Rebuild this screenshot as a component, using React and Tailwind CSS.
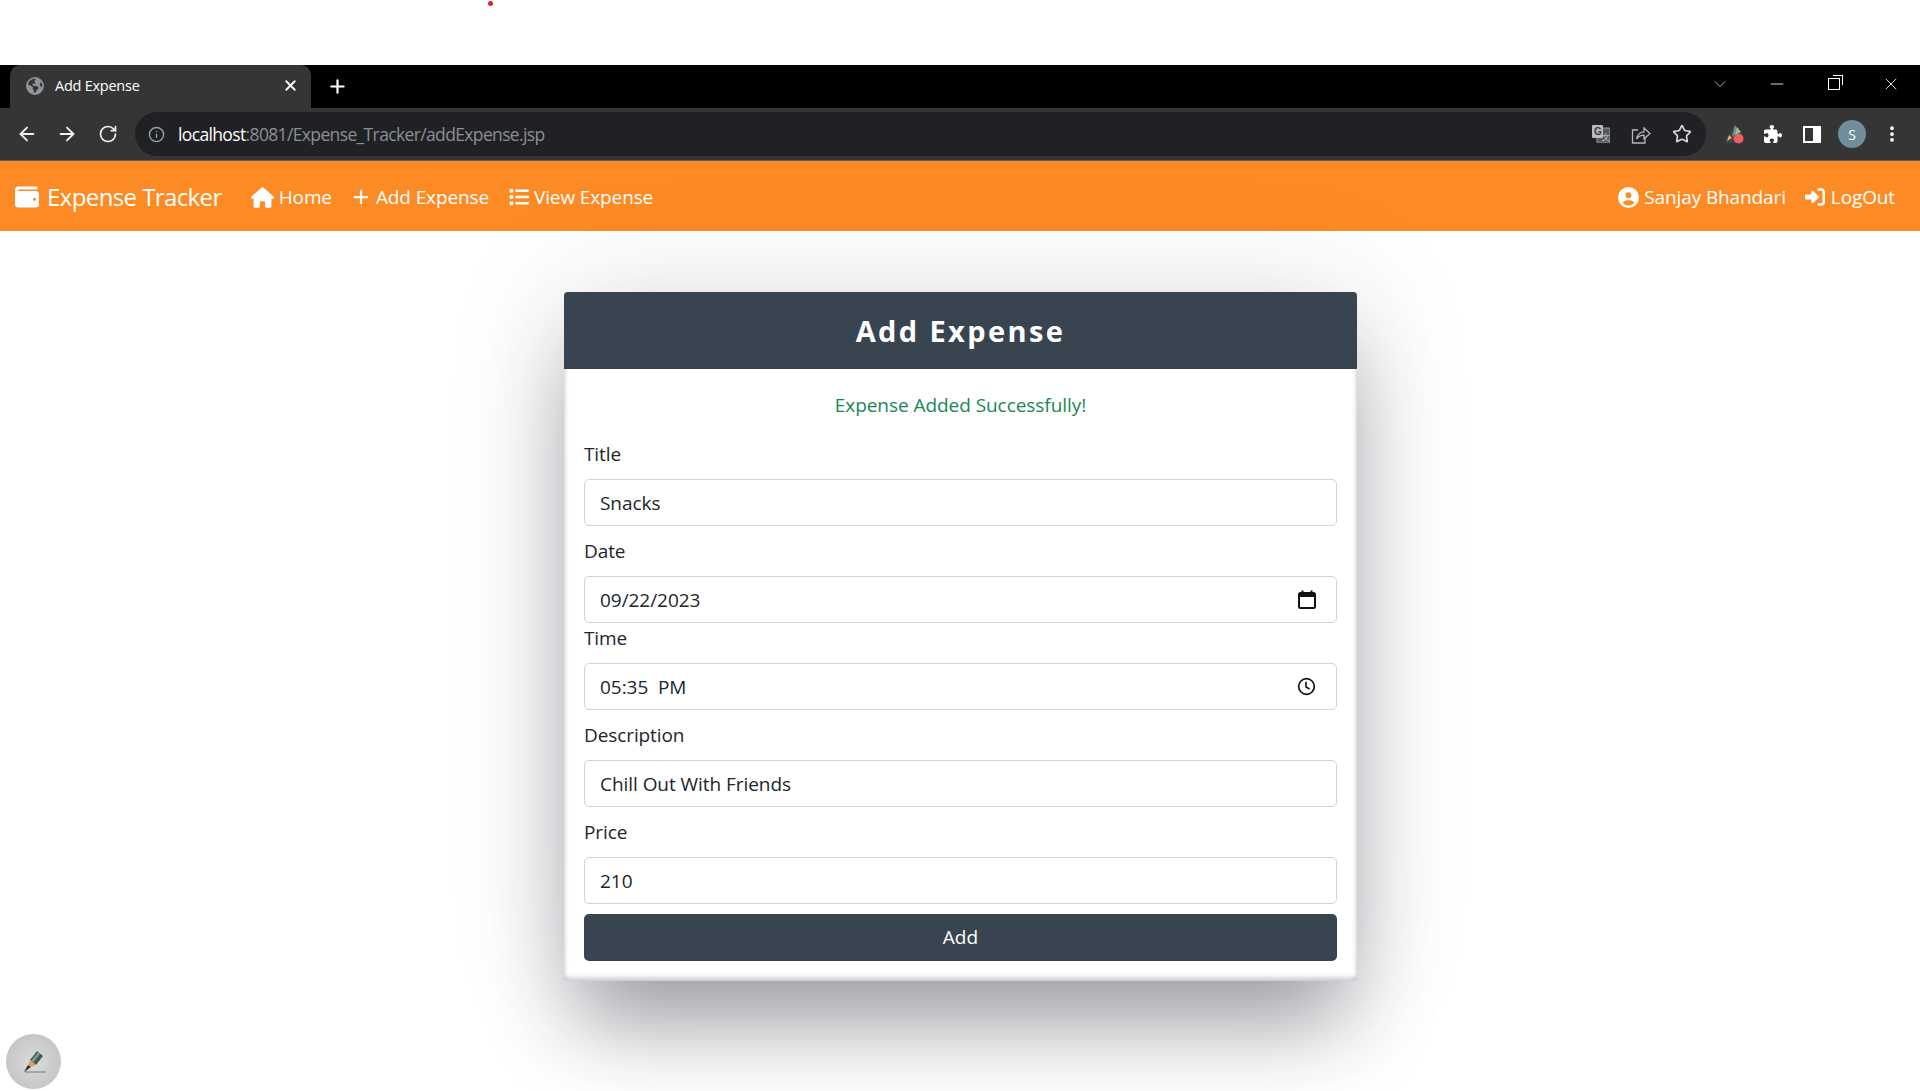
import { ArrowLeft, ArrowRight, RotateCw, Info, Star, MoreVertical, ChevronDown, Minus, X, Plus } from 'lucide-react';
import { FaWallet, FaHouse, FaPlus, FaList, FaCircleUser, FaRightToBracket, FaEarthAmericas, FaPuzzlePiece } from 'react-icons/fa6';

const font = 'font-["Open_Sans","Noto_Sans",sans-serif]';

function Field({ label, value, icon, className = 'mb-[11px]' }) {
  return (
    <div className={className}>
      <label className="mb-[10px] block text-[19px] leading-[29px] tracking-[-0.1px] text-[#212529]">{label}</label>
      <div className="flex h-[47px] items-center rounded-[5px] border border-[#ced4da] bg-white pl-[15px] pr-[20px]">
        <input
          readOnly
          value={value}
          className="min-w-0 flex-1 bg-transparent pt-[2px] text-[19px] tracking-[-0.05px] text-[#212529] outline-none"
        />
        {icon}
      </div>
    </div>
  );
}

function CalendarIcon() {
  return (
    <svg width="18" height="19" viewBox="0 0 18 19" fill="none">
      <rect x="1" y="3" width="16" height="15" rx="1.5" stroke="#111" strokeWidth="2" />
      <rect x="1" y="3" width="16" height="4" fill="#111" />
      <rect x="3.5" y="0.5" width="2" height="3" fill="#111" />
      <rect x="12.5" y="0.5" width="2" height="3" fill="#111" />
    </svg>
  );
}

function ClockIcon() {
  return (
    <svg width="19" height="19" viewBox="0 0 19 19" fill="none">
      <circle cx="9.5" cy="9.5" r="7.8" stroke="#111" strokeWidth="1.7" />
      <path d="M9 4.8V10l3.6 2" stroke="#111" strokeWidth="1.6" />
    </svg>
  );
}

function TranslateIcon() {
  return (
    <svg width="18" height="18" viewBox="0 0 18 18">
      <rect x="5" y="3" width="13" height="15" rx="1" fill="#55585c" stroke="#9a9da0" />
      <rect x="0" y="0" width="11" height="13" rx="1" fill="#b9bbbd" />
      <text x="2" y="10" fontSize="10" fontWeight="700" fontFamily="Liberation Sans" fill="#3a3a3a">G</text>
      <text x="10" y="15" fontSize="8" fill="#d0d0d0" fontFamily="Liberation Sans">文</text>
    </svg>
  );
}

function ShareIcon() {
  return (
    <svg width="20" height="19" viewBox="0 0 20 19" fill="none" stroke="#b5b7b9" strokeWidth="1.3">
      <path d="M7 5H1.5v13H14v-5" />
      <path d="M5.5 14c.7-4.5 4-7.2 7.5-7.2V3l6 5.5-6 5.3v-3.6c-3 0-5.6 1.2-7.5 3.8z" />
    </svg>
  );
}

function ExtensionIcon() {
  return (
    <svg width="21" height="21" viewBox="0 0 21 21">
      <path d="M10 1 0 19h19z" fill="#3b4648" />
      <path d="M11 1l4 6-7 6z" fill="#6f9a82" />
      <path d="M13 3l4 5-6 3z" fill="#9bbf9f" />
      <path d="M5 11l3 3-5 3z" fill="#e7b45a" />
      <circle cx="14.5" cy="14.5" r="5" fill="#ec5f67" />
    </svg>
  );
}

function PenButton() {
  return (
    <div className="absolute left-[6px] top-[1034px] flex h-[55px] w-[55px] items-center justify-center rounded-full bg-[radial-gradient(circle,#dcdcdc_0%,#c6c6c6_70%,#b4b4b4_100%)]">
      <svg width="24" height="24" viewBox="0 0 24 24">
        <path d="M15 1l6 5-7 9-6-5z" fill="#3f5a50" />
        <path d="M16 2l2 2-7 9-2-2z" fill="#7c9a8c" />
        <path d="M8 10l6 5-5 2-3-2z" fill="#d9a35a" />
        <path d="M6 15l3 2-7 5z" fill="#26303a" />
        <rect x="3" y="21.5" width="21" height="1" fill="#777" />
      </svg>
    </div>
  );
}

export default function App() {
  return (
    <div className={`relative h-[1091px] w-full overflow-hidden bg-white ${font}`}>
      {/* white strip over the browser */}
      <div className="h-[65px] pl-[488px] pt-[1px]">
        <div className="h-[5px] w-[5px] rounded-full bg-[#e0202c]" />
      </div>

      {/* tab strip */}
      <div className="flex h-[43px] items-end bg-black pl-[10px]">
        <div className="flex h-[43px] w-[301px] items-center rounded-t-[10px] bg-[#353535] pb-[2px] pl-[16px] pr-[12px]">
          <FaEarthAmericas className="text-[18px] text-[#8f949a]" />
          <span className="ml-[11px] flex-1 text-[14.5px] tracking-[-0.25px] text-white">Add Expense</span>
          <X size={17} color="#fff" strokeWidth={2.5} />
        </div>
        <div className="flex h-[43px] w-[52px] items-center justify-center">
          <Plus size={21} color="#fff" strokeWidth={2.5} />
        </div>
        <div className="ml-auto flex h-[37px] items-center gap-[37px] self-start pr-[19px] text-white">
          <ChevronDown size={20} strokeWidth={1} color="#d0d0d0" />
          <Minus size={20} strokeWidth={1} color="#fff" />
          <div className="flex w-[20px] justify-center">
            <div className="relative h-[12px] w-[12px] border border-white">
              <div className="absolute -right-[4px] -top-[4px] h-[10px] w-[10px] border-r border-t border-white" />
            </div>
          </div>
          <X size={20} strokeWidth={1} color="#fff" />
        </div>
      </div>

      {/* address bar */}
      <div className="flex h-[53px] items-center border-b border-[#5c5c5c] bg-[#353535] pl-[16px]">
        <ArrowLeft size={22} color="#f1f1f1" strokeWidth={2} />
        <ArrowRight size={22} color="#f1f1f1" strokeWidth={2} className="ml-[18px]" />
        <RotateCw size={20} color="#f1f1f1" strokeWidth={2} className="ml-[20px]" />
        <div className="ml-[17px] flex h-[44px] w-[1571px] items-center rounded-full bg-[#202124] pl-[13px] pr-[14px]">
          <Info size={17} color="#9aa0a6" strokeWidth={2} />
          <span className="ml-[13px] text-[17.5px] tracking-[-0.64px] text-white">localhost</span>
          <span className="text-[17.5px] tracking-[-0.64px] text-[#8c8f93]">:8081/Expense_Tracker/addExpense.jsp</span>
          <div className="ml-auto flex items-center gap-[21px]">
            <TranslateIcon />
            <ShareIcon />
            <Star size={20} color="#d8d8d8" strokeWidth={2} />
          </div>
        </div>
        <div className="ml-[18px] flex items-center">
          <ExtensionIcon />
          <FaPuzzlePiece className="ml-[19px] text-[18px] text-white" />
          <div className="ml-[21px] flex h-[17px] w-[18px] justify-end border-2 border-white bg-[#353535]">
            <div className="h-full w-[6px] bg-white" />
          </div>
          <div className="ml-[17px] flex h-[28px] w-[28px] items-center justify-center rounded-full bg-[#6f8d9c] text-[14px] text-white">S</div>
          <MoreVertical size={20} color="#fff" strokeWidth={2.5} className="ml-[16px]" />
        </div>
      </div>

      {/* navbar */}
      <nav className="flex h-[70px] items-center bg-[#fd8b25] pl-[15px] pr-[25px] pt-[2px] text-[19px] tracking-[-0.12px] text-white">
        <FaWallet className="text-[24px]" />
        <span className="ml-[8px] text-[24px] tracking-[-0.6px]">Expense Tracker</span>
        <a className="ml-[29px] flex items-center"><FaHouse className="mr-[5px] text-[23px]" />Home</a>
        <a className="ml-[20px] flex items-center"><FaPlus className="mr-[6px] text-[18px]" />Add Expense</a>
        <a className="ml-[20px] flex items-center"><FaList className="mr-[5px] text-[20px]" />View Expense</a>
        <a className="ml-auto flex items-center"><FaCircleUser className="mr-[5px] text-[21px]" />Sanjay Bhandari</a>
        <a className="ml-[19px] flex items-center"><FaRightToBracket className="mr-[6px] text-[20px]" />LogOut</a>
      </nav>

      {/* form card */}
      <div className="flex justify-center pl-[1px] pt-[61px]">
        <div className="w-[793px] rounded-[4px] bg-white shadow-[0_55px_80px_-14px_rgba(30,30,45,0.4),0_0_120px_rgba(40,40,60,0.13),inset_0_-4px_5px_rgba(60,85,100,0.22),inset_0_0_5px_rgba(60,85,100,0.18)]">
          <div className="flex h-[77px] items-center justify-center rounded-t-[4px] bg-[#384551]">
            <h1 className="text-[29px] font-bold tracking-[2.4px] text-white">Add Expense</h1>
          </div>
          <div className="px-[20px] pb-[20px] pt-[20px]">
            <p className="mb-[19px] text-center text-[19px] leading-[32px] tracking-[-0.05px] text-[#198754]">Expense Added Successfully!</p>
            <Field label="Title" value="Snacks" />
            <Field label="Date" value="09/22/2023" icon={<CalendarIcon />} className="mb-[1px]" />
            <Field label="Time" value="05:35  PM" icon={<ClockIcon />} />
            <Field label="Description" value="Chill Out With Friends" />
            <Field label="Price" value="210" className="mb-[10px]" />
            <button className="h-[47px] w-full rounded-[5px] bg-[#384551] text-[19px] text-white">Add</button>
          </div>
        </div>
      </div>

      <PenButton />
    </div>
  );
}
